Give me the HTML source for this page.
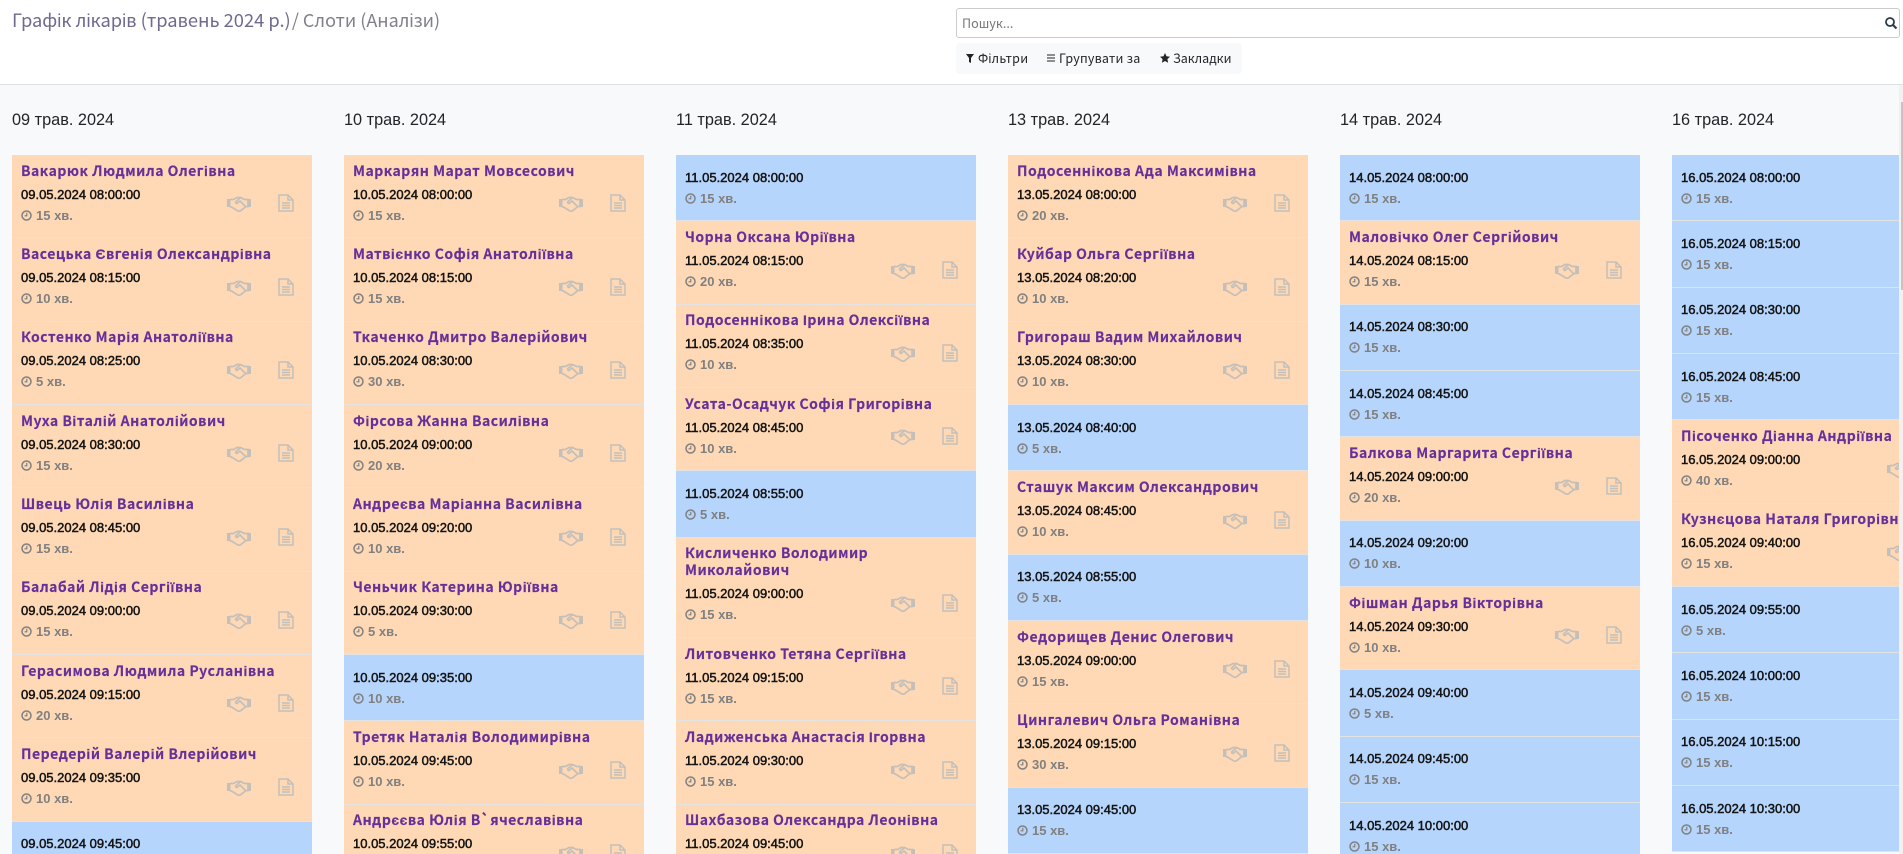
<!DOCTYPE html>
<html lang="uk"><head><meta charset="utf-8"><title>Слоти</title>
<style>
html,body{margin:0;padding:0;width:1903px;height:854px;overflow:hidden;background:#fff;font-family:"Liberation Sans",sans-serif;color:#212529}
.ns{font-family:"Noto Sans CJK SC","Liberation Sans",sans-serif}
#hd{position:absolute;left:0;top:0;width:1903px;height:84px;background:#fff;border-bottom:1px solid #dee2e6}
#t{position:absolute;left:12px;top:7px;font-size:18.3px;line-height:26px;white-space:nowrap;color:#6f6a8e}
#t span{color:#80808c;font-size:18px;margin-left:-3px}
#s{position:absolute;left:956px;top:8px;width:942px;height:28px;border:1px solid #ccc;border-radius:3px;background:#fff}
#s b{position:absolute;left:5px;top:0;font-weight:400;font-size:12.6px;line-height:28px;color:#777}
#s svg{position:absolute;right:1px;top:7px}
#f{position:absolute;left:956px;top:43px;width:286px;height:31px;background:#f8f9fa;border-radius:4px}
#f span{position:absolute;top:0;font-size:12.5px;line-height:30px;white-space:nowrap;color:#212529}
#f svg{position:absolute}
#m{position:absolute;left:0;top:85px;width:1899px;height:769px;overflow:hidden;background:#f8f9fa}
#sb{position:absolute;left:1899px;top:85px;width:4px;height:769px;background:#f1f1f1}
#sb i{position:absolute;left:2px;top:17px;width:2px;height:188px;background:#c4c4c4}
.col{position:absolute;top:0;width:300px}
h4{position:absolute;left:0;top:23px;margin:0;font-weight:400;font-size:16.3px;line-height:24px;white-space:nowrap;color:#212529}
.l{position:absolute;top:70px;left:0;width:300px;box-sizing:border-box;outline:1px solid #e2e3e5;outline-offset:-1px}
.c{position:relative;box-sizing:border-box;height:83.35px;padding:7.5px 9px 0;background:#ffd9b5;border-bottom:1px solid #e3e3e4}
.c.b{height:66.35px;padding-top:11.5px;background:#b6d5fd}
.c.w{height:100.35px}
.n{font-size:14px;line-height:17px;font-weight:700;color:#65309a;margin-bottom:4px;white-space:nowrap;letter-spacing:.5px;-webkit-text-stroke:.15px #65309a}
.c.w .n{white-space:normal}
.d{font-size:13px;line-height:21px;font-weight:400;color:#141414;-webkit-text-stroke:.5px #141414;white-space:nowrap}
.u{font-size:13px;line-height:21px;font-weight:700;color:#808080;white-space:nowrap;position:relative;padding-left:15px}
.u svg{position:absolute;left:0;top:5px}
.h{position:absolute;left:215px;bottom:25px;width:24px;height:16px}
.o{position:absolute;left:266px;bottom:25px;width:16px;height:18px}
</style></head><body>
<svg width="0" height="0" style="position:absolute"><defs>
<symbol id="hs" viewBox="0 0 24 16"><path d="M0 3h3.500v8H0zM20.500 3H24v8h-3.500z" fill="#c4bfb9"/><path d="M3 3.500h3.500L10 1.500h3.500l4 2H21v7h-2l-5.500 4.300q-1.500 1-3 0L4.500 11H3M13 2L9 5.500q-1 1.600 1 2L13 5l5.500 5.500" fill="none" stroke="#c4bfb9" stroke-width="1.700"/></symbol>
<symbol id="dc" viewBox="0 0 16 18"><path d="M1 1h9l5 5v11H1zM10 1v5h5M4 9h8M4 11.500h8M4 14h8" fill="none" stroke="#c4bfb9" stroke-width="1.500"/></symbol>
<symbol id="ck" viewBox="0 0 11 11"><circle cx="5.500" cy="5.500" r="4.500" fill="none" stroke="#808080" stroke-width="1.500"/><path d="M5.800 2.800v3H3.500" fill="none" stroke="#808080" stroke-width="1.200"/></symbol>
</defs></svg>
<div id="hd">
<div id="t" class="ns">Графік лікарів (травень 2024 р.) <span>/ Слоти (Аналізи)</span></div>
<div id="s"><b class="ns">Пошук...</b><svg width="14" height="14" viewBox="0 0 14 14"><circle cx="6" cy="6" r="4" fill="none" stroke="#2b3a4a" stroke-width="1.800"/><path d="M9 9l3.500 3.500" stroke="#2b3a4a" stroke-width="2"/></svg></div>
<div id="f">
<svg style="left:10px;top:11px" width="8" height="9" viewBox="0 0 8 9"><path d="M0 0h8L5 4v5L3 8V4z" fill="#212529"/></svg><span class="ns" style="left:22px;letter-spacing:.3px">Фільтри</span>
<svg style="left:91px;top:11px" width="8" height="8" viewBox="0 0 8 8"><path d="M0 1h8M0 4h8M0 7h8" stroke="#212529"/></svg><span class="ns" style="left:103px;letter-spacing:.2px">Групувати за</span>
<svg style="left:204px;top:10px" width="10" height="10" viewBox="0 0 10 10"><path d="M5 0l1.500 3.300 3.500.4-2.600 2.400.7 3.600L5 8 1.900 9.700l.7-3.600L0 3.700l3.500-.4z" fill="#212529"/></svg><span class="ns" style="left:217px">Закладки</span>
</div>
</div>
<div id="m">
<div class="col" style="left:12px"><h4>09 трав. 2024</h4><div class="l">
<div class="c"><div class="n ns">Вакарюк Людмила Олегівна</div><div class="d">09.05.2024 08:00:00</div><div class="u"><svg width="11" height="11"><use href="#ck"/></svg>15 хв.</div><svg class="h"><use href="#hs"/></svg><svg class="o"><use href="#dc"/></svg></div>
<div class="c"><div class="n ns">Васецька Євгенія Олександрівна</div><div class="d">09.05.2024 08:15:00</div><div class="u"><svg width="11" height="11"><use href="#ck"/></svg>10 хв.</div><svg class="h"><use href="#hs"/></svg><svg class="o"><use href="#dc"/></svg></div>
<div class="c"><div class="n ns">Костенко Марія Анатоліївна</div><div class="d">09.05.2024 08:25:00</div><div class="u"><svg width="11" height="11"><use href="#ck"/></svg>5 хв.</div><svg class="h"><use href="#hs"/></svg><svg class="o"><use href="#dc"/></svg></div>
<div class="c"><div class="n ns">Муха Віталій Анатолійович</div><div class="d">09.05.2024 08:30:00</div><div class="u"><svg width="11" height="11"><use href="#ck"/></svg>15 хв.</div><svg class="h"><use href="#hs"/></svg><svg class="o"><use href="#dc"/></svg></div>
<div class="c"><div class="n ns">Швець Юлія Василівна</div><div class="d">09.05.2024 08:45:00</div><div class="u"><svg width="11" height="11"><use href="#ck"/></svg>15 хв.</div><svg class="h"><use href="#hs"/></svg><svg class="o"><use href="#dc"/></svg></div>
<div class="c"><div class="n ns">Балабай Лідія Сергіївна</div><div class="d">09.05.2024 09:00:00</div><div class="u"><svg width="11" height="11"><use href="#ck"/></svg>15 хв.</div><svg class="h"><use href="#hs"/></svg><svg class="o"><use href="#dc"/></svg></div>
<div class="c"><div class="n ns">Герасимова Людмила Русланівна</div><div class="d">09.05.2024 09:15:00</div><div class="u"><svg width="11" height="11"><use href="#ck"/></svg>20 хв.</div><svg class="h"><use href="#hs"/></svg><svg class="o"><use href="#dc"/></svg></div>
<div class="c"><div class="n ns">Передерій Валерій Влерійович</div><div class="d">09.05.2024 09:35:00</div><div class="u"><svg width="11" height="11"><use href="#ck"/></svg>10 хв.</div><svg class="h"><use href="#hs"/></svg><svg class="o"><use href="#dc"/></svg></div>
<div class="c b"><div class="d">09.05.2024 09:45:00</div><div class="u"><svg width="11" height="11"><use href="#ck"/></svg>15 хв.</div></div>
</div></div>
<div class="col" style="left:344px"><h4>10 трав. 2024</h4><div class="l">
<div class="c"><div class="n ns">Маркарян Марат Мовсесович</div><div class="d">10.05.2024 08:00:00</div><div class="u"><svg width="11" height="11"><use href="#ck"/></svg>15 хв.</div><svg class="h"><use href="#hs"/></svg><svg class="o"><use href="#dc"/></svg></div>
<div class="c"><div class="n ns">Матвієнко Софія Анатоліївна</div><div class="d">10.05.2024 08:15:00</div><div class="u"><svg width="11" height="11"><use href="#ck"/></svg>15 хв.</div><svg class="h"><use href="#hs"/></svg><svg class="o"><use href="#dc"/></svg></div>
<div class="c"><div class="n ns">Ткаченко Дмитро Валерійович</div><div class="d">10.05.2024 08:30:00</div><div class="u"><svg width="11" height="11"><use href="#ck"/></svg>30 хв.</div><svg class="h"><use href="#hs"/></svg><svg class="o"><use href="#dc"/></svg></div>
<div class="c"><div class="n ns">Фірсова Жанна Василівна</div><div class="d">10.05.2024 09:00:00</div><div class="u"><svg width="11" height="11"><use href="#ck"/></svg>20 хв.</div><svg class="h"><use href="#hs"/></svg><svg class="o"><use href="#dc"/></svg></div>
<div class="c"><div class="n ns">Андреєва Маріанна Василівна</div><div class="d">10.05.2024 09:20:00</div><div class="u"><svg width="11" height="11"><use href="#ck"/></svg>10 хв.</div><svg class="h"><use href="#hs"/></svg><svg class="o"><use href="#dc"/></svg></div>
<div class="c"><div class="n ns">Ченьчик Катерина Юріївна</div><div class="d">10.05.2024 09:30:00</div><div class="u"><svg width="11" height="11"><use href="#ck"/></svg>5 хв.</div><svg class="h"><use href="#hs"/></svg><svg class="o"><use href="#dc"/></svg></div>
<div class="c b"><div class="d">10.05.2024 09:35:00</div><div class="u"><svg width="11" height="11"><use href="#ck"/></svg>10 хв.</div></div>
<div class="c"><div class="n ns">Третяк Наталія Володимирівна</div><div class="d">10.05.2024 09:45:00</div><div class="u"><svg width="11" height="11"><use href="#ck"/></svg>10 хв.</div><svg class="h"><use href="#hs"/></svg><svg class="o"><use href="#dc"/></svg></div>
<div class="c"><div class="n ns">Андрєєва Юлія В`ячеславівна</div><div class="d">10.05.2024 09:55:00</div><div class="u"><svg width="11" height="11"><use href="#ck"/></svg>10 хв.</div><svg class="h"><use href="#hs"/></svg><svg class="o"><use href="#dc"/></svg></div>
</div></div>
<div class="col" style="left:676px"><h4>11 трав. 2024</h4><div class="l">
<div class="c b"><div class="d">11.05.2024 08:00:00</div><div class="u"><svg width="11" height="11"><use href="#ck"/></svg>15 хв.</div></div>
<div class="c"><div class="n ns">Чорна Оксана Юріївна</div><div class="d">11.05.2024 08:15:00</div><div class="u"><svg width="11" height="11"><use href="#ck"/></svg>20 хв.</div><svg class="h"><use href="#hs"/></svg><svg class="o"><use href="#dc"/></svg></div>
<div class="c"><div class="n ns">Подосеннікова Ірина Олексіївна</div><div class="d">11.05.2024 08:35:00</div><div class="u"><svg width="11" height="11"><use href="#ck"/></svg>10 хв.</div><svg class="h"><use href="#hs"/></svg><svg class="o"><use href="#dc"/></svg></div>
<div class="c"><div class="n ns">Усата-Осадчук Софія Григорівна</div><div class="d">11.05.2024 08:45:00</div><div class="u"><svg width="11" height="11"><use href="#ck"/></svg>10 хв.</div><svg class="h"><use href="#hs"/></svg><svg class="o"><use href="#dc"/></svg></div>
<div class="c b"><div class="d">11.05.2024 08:55:00</div><div class="u"><svg width="11" height="11"><use href="#ck"/></svg>5 хв.</div></div>
<div class="c w"><div class="n ns">Кисличенко Володимир<br>Миколайович</div><div class="d">11.05.2024 09:00:00</div><div class="u"><svg width="11" height="11"><use href="#ck"/></svg>15 хв.</div><svg class="h"><use href="#hs"/></svg><svg class="o"><use href="#dc"/></svg></div>
<div class="c"><div class="n ns">Литовченко Тетяна Сергіївна</div><div class="d">11.05.2024 09:15:00</div><div class="u"><svg width="11" height="11"><use href="#ck"/></svg>15 хв.</div><svg class="h"><use href="#hs"/></svg><svg class="o"><use href="#dc"/></svg></div>
<div class="c"><div class="n ns">Ладиженська Анастасія Ігорвна</div><div class="d">11.05.2024 09:30:00</div><div class="u"><svg width="11" height="11"><use href="#ck"/></svg>15 хв.</div><svg class="h"><use href="#hs"/></svg><svg class="o"><use href="#dc"/></svg></div>
<div class="c"><div class="n ns">Шахбазова Олександра Леонівна</div><div class="d">11.05.2024 09:45:00</div><div class="u"><svg width="11" height="11"><use href="#ck"/></svg>15 хв.</div><svg class="h"><use href="#hs"/></svg><svg class="o"><use href="#dc"/></svg></div>
</div></div>
<div class="col" style="left:1008px"><h4>13 трав. 2024</h4><div class="l">
<div class="c"><div class="n ns">Подосеннікова Ада Максимівна</div><div class="d">13.05.2024 08:00:00</div><div class="u"><svg width="11" height="11"><use href="#ck"/></svg>20 хв.</div><svg class="h"><use href="#hs"/></svg><svg class="o"><use href="#dc"/></svg></div>
<div class="c"><div class="n ns">Куйбар Ольга Сергіївна</div><div class="d">13.05.2024 08:20:00</div><div class="u"><svg width="11" height="11"><use href="#ck"/></svg>10 хв.</div><svg class="h"><use href="#hs"/></svg><svg class="o"><use href="#dc"/></svg></div>
<div class="c"><div class="n ns">Григораш Вадим Михайлович</div><div class="d">13.05.2024 08:30:00</div><div class="u"><svg width="11" height="11"><use href="#ck"/></svg>10 хв.</div><svg class="h"><use href="#hs"/></svg><svg class="o"><use href="#dc"/></svg></div>
<div class="c b"><div class="d">13.05.2024 08:40:00</div><div class="u"><svg width="11" height="11"><use href="#ck"/></svg>5 хв.</div></div>
<div class="c"><div class="n ns">Сташук Максим Олександрович</div><div class="d">13.05.2024 08:45:00</div><div class="u"><svg width="11" height="11"><use href="#ck"/></svg>10 хв.</div><svg class="h"><use href="#hs"/></svg><svg class="o"><use href="#dc"/></svg></div>
<div class="c b"><div class="d">13.05.2024 08:55:00</div><div class="u"><svg width="11" height="11"><use href="#ck"/></svg>5 хв.</div></div>
<div class="c"><div class="n ns">Федорищев Денис Олегович</div><div class="d">13.05.2024 09:00:00</div><div class="u"><svg width="11" height="11"><use href="#ck"/></svg>15 хв.</div><svg class="h"><use href="#hs"/></svg><svg class="o"><use href="#dc"/></svg></div>
<div class="c"><div class="n ns">Цингалевич Ольга Романівна</div><div class="d">13.05.2024 09:15:00</div><div class="u"><svg width="11" height="11"><use href="#ck"/></svg>30 хв.</div><svg class="h"><use href="#hs"/></svg><svg class="o"><use href="#dc"/></svg></div>
<div class="c b"><div class="d">13.05.2024 09:45:00</div><div class="u"><svg width="11" height="11"><use href="#ck"/></svg>15 хв.</div></div>
</div></div>
<div class="col" style="left:1340px"><h4>14 трав. 2024</h4><div class="l">
<div class="c b"><div class="d">14.05.2024 08:00:00</div><div class="u"><svg width="11" height="11"><use href="#ck"/></svg>15 хв.</div></div>
<div class="c"><div class="n ns">Маловічко Олег Сергійович</div><div class="d">14.05.2024 08:15:00</div><div class="u"><svg width="11" height="11"><use href="#ck"/></svg>15 хв.</div><svg class="h"><use href="#hs"/></svg><svg class="o"><use href="#dc"/></svg></div>
<div class="c b"><div class="d">14.05.2024 08:30:00</div><div class="u"><svg width="11" height="11"><use href="#ck"/></svg>15 хв.</div></div>
<div class="c b"><div class="d">14.05.2024 08:45:00</div><div class="u"><svg width="11" height="11"><use href="#ck"/></svg>15 хв.</div></div>
<div class="c"><div class="n ns">Балкова Маргарита Сергіївна</div><div class="d">14.05.2024 09:00:00</div><div class="u"><svg width="11" height="11"><use href="#ck"/></svg>20 хв.</div><svg class="h"><use href="#hs"/></svg><svg class="o"><use href="#dc"/></svg></div>
<div class="c b"><div class="d">14.05.2024 09:20:00</div><div class="u"><svg width="11" height="11"><use href="#ck"/></svg>10 хв.</div></div>
<div class="c"><div class="n ns">Фішман Дарья Вікторівна</div><div class="d">14.05.2024 09:30:00</div><div class="u"><svg width="11" height="11"><use href="#ck"/></svg>10 хв.</div><svg class="h"><use href="#hs"/></svg><svg class="o"><use href="#dc"/></svg></div>
<div class="c b"><div class="d">14.05.2024 09:40:00</div><div class="u"><svg width="11" height="11"><use href="#ck"/></svg>5 хв.</div></div>
<div class="c b"><div class="d">14.05.2024 09:45:00</div><div class="u"><svg width="11" height="11"><use href="#ck"/></svg>15 хв.</div></div>
<div class="c b"><div class="d">14.05.2024 10:00:00</div><div class="u"><svg width="11" height="11"><use href="#ck"/></svg>15 хв.</div></div>
</div></div>
<div class="col" style="left:1672px"><h4>16 трав. 2024</h4><div class="l">
<div class="c b"><div class="d">16.05.2024 08:00:00</div><div class="u"><svg width="11" height="11"><use href="#ck"/></svg>15 хв.</div></div>
<div class="c b"><div class="d">16.05.2024 08:15:00</div><div class="u"><svg width="11" height="11"><use href="#ck"/></svg>15 хв.</div></div>
<div class="c b"><div class="d">16.05.2024 08:30:00</div><div class="u"><svg width="11" height="11"><use href="#ck"/></svg>15 хв.</div></div>
<div class="c b"><div class="d">16.05.2024 08:45:00</div><div class="u"><svg width="11" height="11"><use href="#ck"/></svg>15 хв.</div></div>
<div class="c"><div class="n ns">Пісоченко Діанна Андріївна</div><div class="d">16.05.2024 09:00:00</div><div class="u"><svg width="11" height="11"><use href="#ck"/></svg>40 хв.</div><svg class="h"><use href="#hs"/></svg><svg class="o"><use href="#dc"/></svg></div>
<div class="c"><div class="n ns">Кузнєцова Наталя Григорівна</div><div class="d">16.05.2024 09:40:00</div><div class="u"><svg width="11" height="11"><use href="#ck"/></svg>15 хв.</div><svg class="h"><use href="#hs"/></svg><svg class="o"><use href="#dc"/></svg></div>
<div class="c b"><div class="d">16.05.2024 09:55:00</div><div class="u"><svg width="11" height="11"><use href="#ck"/></svg>5 хв.</div></div>
<div class="c b"><div class="d">16.05.2024 10:00:00</div><div class="u"><svg width="11" height="11"><use href="#ck"/></svg>15 хв.</div></div>
<div class="c b"><div class="d">16.05.2024 10:15:00</div><div class="u"><svg width="11" height="11"><use href="#ck"/></svg>15 хв.</div></div>
<div class="c b"><div class="d">16.05.2024 10:30:00</div><div class="u"><svg width="11" height="11"><use href="#ck"/></svg>15 хв.</div></div>
</div></div>
</div>
<div id="sb"><i></i></div>
</body></html>
